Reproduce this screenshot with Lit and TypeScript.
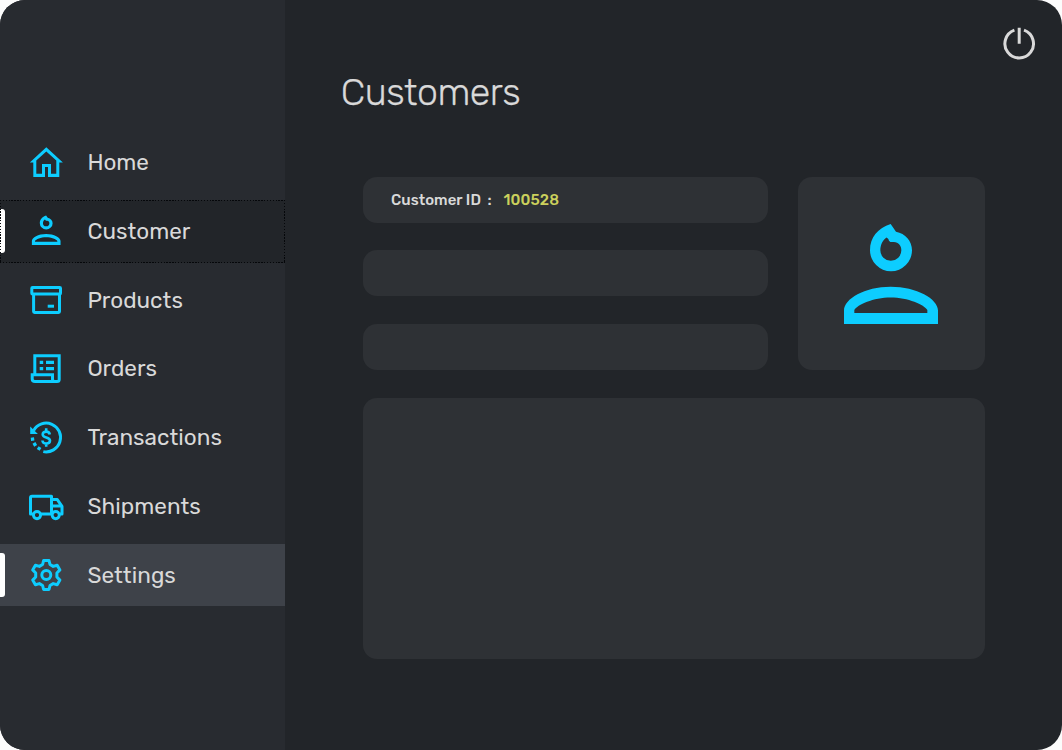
import { LitElement, html, svg, css } from "lit";
import { customElement, state } from "lit/decorators.js";

const person = svg`
  <path fill="currentColor" fill-rule="evenodd" d="M303 177 L319 200 C347 205 367 228 367 255 A63 63 0 0 1 241 255 C241 217 265 189 303 177Z M291 217 C279 224 272 240 272 255 A31.5 31.5 0 0 0 335 255 C335 242 326 230 311 231 L302 231 Q297 228 296 222Z"/>
  <path fill="currentColor" fill-rule="evenodd" d="M163 475 V435 C163 400 225 364 303 364 S445 400 445 435 V475Z M194 442 H413 V433 C404 418 355 396 303 396 S203 418 194 433Z"/>`;

const icons: Record<string, unknown> = {
  Home: svg`<path fill="currentColor" fill-rule="evenodd" d="M18.3 2.3 L34.9 17.6 H31.3 V31.9 H20 V22.1 H17 V31.9 H5.3 V17.6 H1.8Z M18.3 6.4 L8.3 15.6 V28.8 H14 V19.1 H23 V28.8 H28.3 V15.6Z"/>`,
  Customer: svg`<g transform="translate(-12.7 -15.2) scale(.1017 .0995)">${person}</g>`,
  Products: svg`<g fill="none" stroke="currentColor" stroke-width="3"><rect x="3.8" y="5.5" width="28.7" height="6.5" rx=".8"/><path d="M5.6 12 V29.6 Q5.6 30.5 6.5 30.5 H30.6 Q31.5 30.5 31.5 29.6 V12"/></g><path fill="currentColor" d="M19.7 22.7H26v3h-6.3z"/>`,
  Orders: svg`<g fill="none" stroke="currentColor" stroke-width="3"><path d="M6.8 23.5 V4.8 H31.2 V28.5 Q31.2 30.5 29 30.5 H7 Q4.2 30.5 4.2 28 V23.8 H24.5 V28.5 Q24.5 30.5 28 30.5"/></g><path fill="currentColor" d="M11.7 9.8h3.5V13h-3.5zM18 9.8h8V13h-8zM11.7 16h3.5v3.2h-3.5zM18 16h8v3.2h-8z"/>`,
  Transactions: svg`<g transform="translate(0 -.4)"><path fill="none" stroke="currentColor" stroke-width="3" d="M5.6 10.8 A14.4 14.4 0 1 1 15.3 32"/><path fill="currentColor" d="M2.2 7 L9.9 14.5 L2.2 14.5Z M2.7 18.1l3.3-.4.4 3.2-3.3.4zM4.5 24.2l2.9-1.7 1.7 2.9-2.9 1.7zM8.8 29.4l1.8-2.8 2.8 1.8-1.8 2.8z"/><path fill="none" stroke="currentColor" stroke-width="2.6" d="M18.2 8.7v3.3M18.2 24v3.2M21.8 14.9C21.5 13 20.2 12 18.2 12C16.1 12 14.7 13.1 14.7 14.8C14.7 18.8 22 16.8 22 21C22 22.9 20.5 24 18.3 24C16.1 24 14.6 23 14.4 20.9"/></g>`,
  Shipments: svg`<g fill="none" stroke="currentColor" stroke-width="3"><path stroke-linejoin="round" d="M5.2 26 H2.5 V9.8 Q2.5 8.3 4 8.3 H23.5 V26 M12.8 26 H24 M23.5 11.6 H29.3 L34 18.4 V26 H31.8 M23.5 18 H33.5"/><circle cx="9" cy="27.1" r="3.6" stroke-width="2.9"/><circle cx="27.7" cy="27.1" r="3.6" stroke-width="2.9"/></g>`,
  Settings: svg`<g fill="none" stroke="currentColor" stroke-width="3"><path stroke-linejoin="round" d="M15.6 3.5 H21 L22 7.5 L25.2 9.4 L29.2 8.2 L31.9 12.9 L28.9 16 V20 L31.9 23.1 L29.2 27.8 L25.2 26.6 L22 28.5 L21 32.5 H15.6 L14.6 28.5 L11.4 26.6 L7.4 27.8 L4.7 23.1 L7.7 20 V16 L4.7 12.9 L7.4 8.2 L11.4 9.4 L14.6 7.5Z"/><circle cx="18.3" cy="18" r="4.5"/></g>`,
};

const items = [
  { name: "Home", width: 61.5 },
  { name: "Customer", width: 103 },
  { name: "Products", width: 95.5 },
  { name: "Orders", width: 69.5 },
  { name: "Transactions", width: 134.5 },
  { name: "Shipments", width: 113.5 },
  { name: "Settings", width: 88.5 },
];

@customElement("app-root")
export class AppRoot extends LitElement {
  @state() private focused = "Customer";
  @state() private hovered = "Settings";

  static styles = css`
    :host { display: block; height: 750px; background: #fcfcfc; font-family: Rubik, Roboto, sans-serif; color: #d9d9d9; }
    * { box-sizing: border-box; }
    .window { display: flex; height: 750px; border-radius: 25px; overflow: hidden; background: #222529; }
    nav { width: 285px; flex: none; background: #282b30; padding-top: 131.4px; display: flex; flex-direction: column; gap: 6.4px; }
    .item { position: relative; height: 62.4px; flex: none; display: flex; align-items: center; padding: 0 0 0 28px; gap: 23.4px; border: 0; background: none; color: inherit; font: 22.5px Rubik, Roboto, sans-serif; text-align: left; }
    .item svg { width: 36px; height: 36px; flex: none; color: #0dcdff; overflow: visible; }
    .focused { background: #222529; }
    .hovered { background: #3e4249; }
    .focused::before, .hovered::before { content: ""; position: absolute; left: 0; top: 9px; width: 5px; height: 44px; background: #fff; border-radius: 0 3px 3px 0; }
    .focused::after {
      content: ""; position: absolute; inset: 0 0 -.6px;
      --h: repeating-linear-gradient(90deg, #05070a 0 1.4px, transparent 1.4px 2.87px);
      --v: repeating-linear-gradient(180deg, #05070a 0 1.4px, transparent 1.4px 2.87px);
      background: var(--h) 0 0 / 100% 1.2px no-repeat, var(--h) 0 100% / 100% 1.2px no-repeat,
        var(--v) 0 0 / 1.2px 100% no-repeat, var(--v) 100% 0 / 1.2px 100% no-repeat;
    }
    .label { display: block; white-space: nowrap; }
    main { flex: 1; padding: 25px 25.3px 0 55.8px; display: flex; flex-direction: column; }
    .top { display: flex; justify-content: space-between; align-items: flex-start; height: 151.7px; }
    h1 { margin: 44.4px 0 0; font-weight: 300; font-size: 37.5px; line-height: 46px; white-space: nowrap; -webkit-text-stroke: .25px #d9d9d9; }
    h1 span { display: block; }
    .power { width: 36px; height: 36px; }
    .grid { display: grid; grid-template-columns: 405px 187.6px; grid-template-rows: 46px 46px 46px 261px; column-gap: 30px; row-gap: 27.7px; margin-left: 21.8px; }
    .card { background: #2e3135; border-radius: 14px; }
    .field { display: flex; align-items: center; padding-left: 28.4px; font-size: 15px; font-weight: 500; }
    .photo { grid-column: 2; grid-row: 1 / span 3; display: flex; align-items: center; justify-content: center; color: #0dcdff; padding-top: 1.2px; }
    .photo svg { width: 94px; height: 100px; }
    .details { grid-column: 1 / span 2; }
    .fit { white-space: nowrap; }
    .colon { margin-left: 6.5px; }
    .id { color: #cbd05c; margin-left: 12px; white-space: nowrap; }
  `;

  // Tracks each label out to its design width once the fonts have been laid out.
  private fitLabels() {
    this.renderRoot.querySelectorAll<HTMLElement>("[data-width]").forEach((el) => {
      el.style.letterSpacing = "0px";
      const range = document.createRange();
      range.selectNodeContents(el);
      const natural = range.getBoundingClientRect().width;
      const count = (el.textContent ?? "").length;
      el.style.letterSpacing = `${(Number(el.dataset.width) - natural) / count}px`;
    });
  }

  firstUpdated() {
    this.fitLabels();
    document.fonts.ready.then(() => this.fitLabels());
  }

  render() {
    return html`
      <div class="window">
        <nav>
          ${items.map(({ name, width }) => html`
            <button class="item ${name === this.focused ? "focused" : ""} ${name === this.hovered ? "hovered" : ""}">
              <svg viewBox="0 0 36 36">${icons[name]}</svg>
              <span class="label" data-width=${width}>${name}</span>
            </button>`)}
        </nav>
        <main>
          <div class="top">
            <h1><span data-width="179.5">Customers</span></h1>
            <svg class="power" viewBox="0 0 36 36" fill="none" stroke="#d9d9d9" stroke-width="3">
              <path d="M13.4 5.2 A14.3 14.3 0 1 0 23 5.2 M18.2 2.7 V18.7"/>
            </svg>
          </div>
          <div class="grid">
            <div class="card field">
              <span class="fit" data-width="90">Customer ID</span><span class="colon">:</span><span class="id" data-width="55.5">100528</span>
            </div>
            <div class="card photo"><svg viewBox="163 177 282 298" preserveAspectRatio="none">${person}</svg></div>
            <div class="card"></div>
            <div class="card"></div>
            <div class="card details"></div>
          </div>
        </main>
      </div>`;
  }
}
